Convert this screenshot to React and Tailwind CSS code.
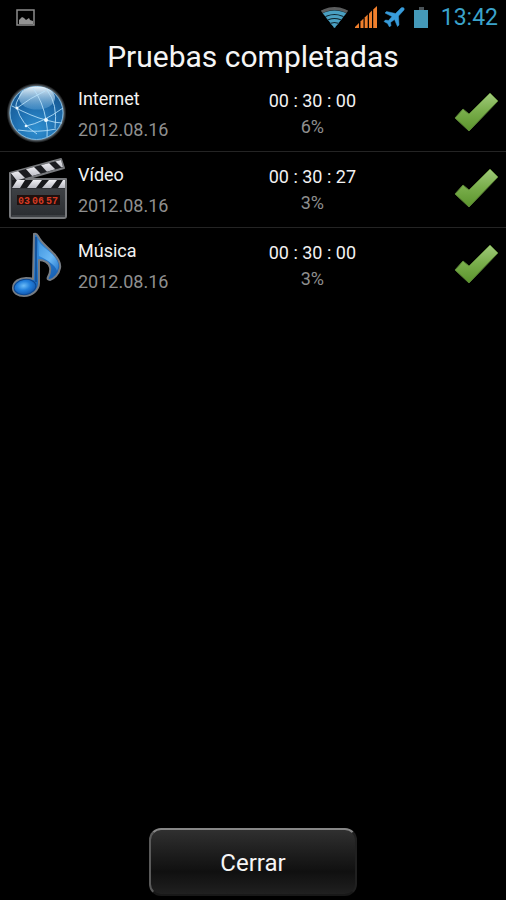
const tests = [
  { id: 'internet', name: 'Internet', date: '2012.08.16', time: '00 : 30 : 00', battery: '6%', Icon: GlobeIcon },
  { id: 'video', name: 'Vídeo', date: '2012.08.16', time: '00 : 30 : 27', battery: '3%', Icon: ClapperIcon },
  { id: 'music', name: 'Música', date: '2012.08.16', time: '00 : 30 : 00', battery: '3%', Icon: NoteIcon },
];

function GlobeIcon() {
  return (
    <svg viewBox="0 0 72 75" className="w-[72px] h-[75px]" aria-hidden="true">
      <defs>
        <radialGradient id="globeFill" cx="0.5" cy="0.8" r="0.75">
          <stop offset="0" stopColor="#2f8fd0" />
          <stop offset="0.55" stopColor="#1f6fb0" />
          <stop offset="1" stopColor="#15568f" />
        </radialGradient>
        <linearGradient id="globeShine" x1="0" y1="0" x2="0" y2="1">
          <stop offset="0" stopColor="#f4fbff" stopOpacity="0.95" />
          <stop offset="1" stopColor="#8cc6ee" stopOpacity="0.25" />
        </linearGradient>
        <radialGradient id="globeGlow">
          <stop offset="0.86" stopColor="#a9b9c4" stopOpacity="0.9" />
          <stop offset="1" stopColor="#8a98a2" stopOpacity="0" />
        </radialGradient>
      </defs>
      <circle cx="36.5" cy="37" r="30" fill="url(#globeGlow)" />
      <circle cx="36.5" cy="37" r="26.5" fill="url(#globeFill)" stroke="#78b7e2" />
      <ellipse cx="37" cy="22" rx="18" ry="11.5" fill="url(#globeShine)" />
      <g fill="none" stroke="#b9e2fa" strokeWidth="1" strokeOpacity="0.85">
        <path d="M23 15Q13 30 17 32Q21 48 37 58" />
        <path d="M12 30Q33 41 46 44Q56 47 62 47" />
        <path d="M33 12Q43 26 46 44Q48 53 47 61" />
        <path d="M17 32Q30 22 45 15" />
        <path d="M26 50Q42 47 63 32" />
        <path d="M47 14Q58 28 55 52" />
        <path d="M18 54Q38 57 56 53" />
      </g>
      <g fill="#eaf8ff">
        <circle cx="17" cy="32" r="1.5" />
        <circle cx="46" cy="44" r="2" />
        <circle cx="26" cy="50" r="1.3" />
      </g>
    </svg>
  );
}

function ClapperIcon() {
  return (
    <svg viewBox="0 0 72 75" className="w-[72px] h-[75px]" aria-hidden="true">
      <defs>
        <linearGradient id="slateFill" x1="0" y1="0" x2="0" y2="1">
          <stop offset="0" stopColor="#3d4044" />
          <stop offset="1" stopColor="#2a2d31" />
        </linearGradient>
        <linearGradient id="stripeFill" x1="0" y1="0" x2="0" y2="1">
          <stop offset="0" stopColor="#f1f1f5" />
          <stop offset="1" stopColor="#b9bac2" />
        </linearGradient>
        <clipPath id="armClip"><path d="M11 21L61 8L63 15L15 29Z" /></clipPath>
        <clipPath id="barClip"><path d="M12 28H65V36H12Z" /></clipPath>
      </defs>
      <path d="M10 21L61 7L64 16L26 27H66V64Q66 66 64 66H12Q10 66 10 64Z" fill="#303236" stroke="#77797c" strokeWidth="2" strokeLinejoin="round" />
      <path d="M11 21L61 8L63 15L15 29Z" fill="#1b1c20" />
      <g clipPath="url(#armClip)" fill="url(#stripeFill)">
        <path d="M10 20L17 18L26 27L18 30Z" />
        <path d="M25 16L33 14L41 22L33 25Z" />
        <path d="M40 12L48 10L56 18L48 21Z" />
        <path d="M54 8L61 6L67 14L63 17Z" />
      </g>
      <path d="M12 28H65V36H12Z" fill="#17181b" />
      <g clipPath="url(#barClip)" fill="url(#stripeFill)">
        <path d="M17 28H25L20 36H12Z" />
        <path d="M33 28H42L36 36H27Z" />
        <path d="M49 28H57L51 36H42Z" />
        <path d="M63 28H70L65 36H58Z" />
      </g>
      <path d="M12 37H65V65H12Z" fill="url(#slateFill)" />
      <path d="M17 43H60V53H17Z" fill="#20100e" />
      <g fill="#d63a22" className="font-['Liberation_Mono',monospace] text-[10px] font-bold">
        <text x="18" y="52">03</text>
        <text x="32" y="52">06</text>
        <text x="46" y="52">57</text>
      </g>
      <path d="M12 63H65V65H12Z" fill="#3e4145" />
    </svg>
  );
}

function NoteIcon() {
  return (
    <svg viewBox="0 0 72 75" className="w-[72px] h-[75px]" aria-hidden="true">
      <defs>
        <linearGradient id="noteFill" x1="0" y1="0" x2="0.6" y2="1">
          <stop offset="0" stopColor="#1a62b4" />
          <stop offset="0.5" stopColor="#2f86d8" />
          <stop offset="1" stopColor="#1258ac" />
        </linearGradient>
        <radialGradient id="noteHead" cx="0.45" cy="0.4" r="0.6">
          <stop offset="0" stopColor="#6cbcf7" />
          <stop offset="0.5" stopColor="#2380dc" />
          <stop offset="1" stopColor="#1359b0" />
        </radialGradient>
        <linearGradient id="noteShine" x1="0" y1="0" x2="1" y2="1">
          <stop offset="0" stopColor="#3d93de" />
          <stop offset="0.6" stopColor="#6bb8f4" />
          <stop offset="1" stopColor="#2a7ccf" />
        </linearGradient>
      </defs>
      <path
        d="M34 6C36 5 37 6 38 8C42 16 47 18 53 25C59 31 61 35 60 40C59 46 54 51 50 52C48 52 47 51 48 49C52 42 50 36 46 34C43 32 41 32 39 32V55C39 62 32 68 24 68C18 68 13 65 13 60C13 53 20 50 26 50C29 50 31 50 33 51Z"
        fill="url(#noteFill)"
        stroke="#777d84"
        strokeWidth="2"
        strokeLinejoin="round"
      />
      <path d="M38 12C42 19 47 21 52 26C58 32 60 37 57 43C55 37 49 33 39 28Z" fill="url(#noteShine)" />
      <path d="M36 9V54" stroke="#14559f" strokeWidth="2" />
      <ellipse cx="25" cy="59" rx="11" ry="7.5" transform="rotate(-10 25 59)" fill="url(#noteHead)" stroke="#0d4891" />
    </svg>
  );
}

function CheckIcon() {
  return (
    <svg viewBox="0 0 48 44" className="w-12 h-11" role="img" aria-label="Completada">
      <defs>
        <linearGradient id="checkFill" x1="0" y1="0" x2="0" y2="1">
          <stop offset="0" stopColor="#a0ca7a" />
          <stop offset="0.5" stopColor="#78ad4a" />
          <stop offset="1" stopColor="#5b942c" />
        </linearGradient>
      </defs>
      <path d="M1 26L9 17L15 22L36 1L44 9L15 39Z" fill="url(#checkFill)" stroke="#5a8235" strokeWidth="1" strokeLinejoin="round" />
    </svg>
  );
}

function StatusBar() {
  return (
    <header className="h-9 flex items-center justify-between pl-4 pr-2">
      <svg viewBox="0 0 20 18" className="w-5 h-[18px]" aria-hidden="true">
        <path d="M1 1H18V16H1Z" fill="none" stroke="#8c8c8c" strokeWidth="1.5" />
        <path d="M3 15V11L5 9L6 8L8 9L10 11L13 9L14 11L17 12V15Z" fill="#929292" />
      </svg>
      <div className="flex items-center">
        <svg viewBox="0 0 108 24" className="w-[108px] h-6 mr-3" aria-hidden="true">
          <clipPath id="wifiClip"><path d="M0 5V0H27V5L13.500 22Z" /></clipPath>
          <g clipPath="url(#wifiClip)">
            <circle cx="13.500" cy="29" r="28" fill="#5b5d5e" />
            <circle cx="13.500" cy="29" r="25" fill="#10242d" />
            <circle cx="13.500" cy="29" r="24.500" fill="#4aa0c2" />
            <circle cx="13.500" cy="28" r="20" fill="#10242d" />
            <circle cx="13.500" cy="28" r="19" fill="#4aa0c2" />
            <circle cx="13.500" cy="27" r="15" fill="#10242d" />
            <circle cx="13.500" cy="27" r="14" fill="#4aa0c2" />
            <circle cx="13.500" cy="26" r="10" fill="#10242d" />
            <circle cx="13.500" cy="26" r="9" fill="#4aa0c2" />
          </g>
          <g fill="#f07f2c">
            <path d="M34 22V21L38 17V22Z" />
            <path d="M39.500 22V15.500L42.500 12.500V22Z" />
            <path d="M43.700 22V11.500L46.700 8.500V22Z" />
            <path d="M48 22V7.500L51 4.500V22Z" />
            <path d="M52.200 22V3.500L56 0V22Z" />
          </g>
          <path
            d="M80 2C82 1 84 2 83 4L77.500 10L78 19L76.500 20.500L73.500 13.500L69.500 16.500L70 19.500L68.500 21L66.500 17.500L63 15.500L64.500 14L67.500 14.500L71 10.500L64 7L65.500 5.500L74.500 7.500Z"
            fill="#389cdb"
            stroke="#389cdb"
            strokeWidth="0.500"
            strokeLinejoin="round"
          />
          <path d="M98 2H103V4H107V22H93V4H98Z" fill="#4499b9" />
          <path d="M98 1H103V4H98Z" fill="#4a5358" />
        </svg>
        <time className="text-[23px] leading-9 text-[#3ba3cb]">13:42</time>
      </div>
    </header>
  );
}

function TestRow({ test }) {
  const { name, date, time, battery, Icon } = test;
  return (
    <li className="h-[76px] flex items-center border-b border-[#242424] last:border-transparent pr-1">
      <div className="flex-1 flex items-center">
        <Icon />
        <div className="pl-[6px]">
          <h2 className="text-[18px] leading-[31px] text-[#f2f2f2]">{name}</h2>
          <p className="text-[18px] leading-[31px] text-[#8f8f8f]">{date}</p>
        </div>
      </div>
      <div className="pt-px text-center text-[18px] leading-[26px]">
        <p className="text-[#f2f2f2]">{time}</p>
        <p className="text-[#8f8f8f]">{battery}</p>
      </div>
      <div className="w-[146px] flex justify-end">
        <CheckIcon />
      </div>
    </li>
  );
}

export default function App() {
  return (
    <div className="min-h-screen flex flex-col bg-black font-['Roboto',sans-serif]">
      <StatusBar />
      <main className="flex-1 flex flex-col">
        <h1 className="h-10 text-center text-[30px] leading-[42px] text-[#f5f5f5]">Pruebas completadas</h1>
        <ul className="flex-1">
          {tests.map(t => <TestRow key={t.id} test={t} />)}
        </ul>
        <div className="flex justify-center pb-1">
          <button
            type="button"
            className="w-52 h-[68px] pt-0.5 rounded-xl border-2 border-t-[#868686] border-l-[#5a5a5a] border-r-[#202020] border-b-[#181818] bg-linear-to-b from-[#303030] from-0% via-[#101010] via-65% to-[#202020] to-100% text-2xl text-[#f5f5f5]"
          >
            Cerrar
          </button>
        </div>
      </main>
    </div>
  );
}
